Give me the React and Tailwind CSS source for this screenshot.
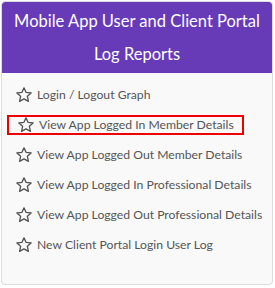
export default function App() {
  const items = [
    "Login / Logout Graph",
    "View App Logged In Member Details",
    "View App Logged Out Member Details",
    "View App Logged In Professional Details",
    "View App Logged Out Professional Details",
    "New Client Portal Login User Log",
  ];
  const Star = () => (
    <svg width="18" height="18" viewBox="0 0 24 24" fill="none" stroke="#555" strokeWidth="1.8" strokeLinejoin="round" className="shrink-0">
      <polygon points="12,2.5 14.9,8.6 21.5,9.3 16.5,13.8 17.9,20.5 12,17.1 6.1,20.5 7.5,13.8 2.5,9.3 9.1,8.6" />
    </svg>
  );
  return (
    <div className="w-[275px] h-[288px] bg-white pt-[1px] pl-[1px]" style={{ fontFamily: "Lato, 'Open Sans', sans-serif" }}>
      <div className="w-[272px] h-[284px] border border-[#dddddd] rounded-[4px] bg-[#f9f9f9] overflow-hidden flex flex-col">
        <div className="bg-[#673ab7] text-white text-center text-[16.5px] leading-[33px] pt-[3px] pb-[2px] px-2 rounded-t-[3px] whitespace-nowrap">
          Mobile App User and Client Portal<br />Log Reports
        </div>
        <div className="flex flex-col gap-[10px] pt-[12px] pl-[5px]">
          {items.map((t, i) => (
            <div
              key={i}
              className={
                "flex items-center gap-[4px] h-[20px] pl-[8px] text-[12.2px] text-[#555] whitespace-nowrap " +
                (i === 1 ? "border-2 border-[#e00] w-[237px] pl-[6px]" : "")
              }
            >
              <Star />
              <span>{t}</span>
            </div>
          ))}
        </div>
      </div>
    </div>
  );
}
